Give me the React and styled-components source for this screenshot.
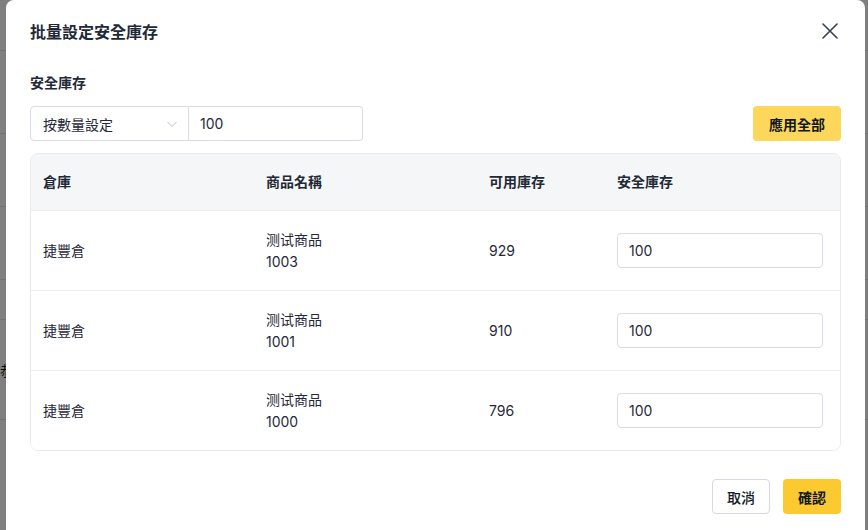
import React from 'react'
import styled, { createGlobalStyle } from 'styled-components'

const GlobalStyle = createGlobalStyle`
  html, body {
    margin: 0;
    padding: 0;
    height: 100%;
  }
  body {
    font-family: Inter, "Noto Sans CJK TC", "Noto Sans", sans-serif;
    color: #1f2937;
    background: #ffffff;
    overflow: hidden;
  }
  * { box-sizing: border-box; }
`

const rows = [
  { warehouse: '捷豐倉', name: '测试商品', sku: '1003', available: 929, safety: 100 },
  { warehouse: '捷豐倉', name: '测试商品', sku: '1001', available: 910, safety: 100 },
  { warehouse: '捷豐倉', name: '测试商品', sku: '1000', available: 796, safety: 100 },
]

// page sitting behind the dim layer
const BackPage = styled.div`
  height: 530px;
  display: flex;
  flex-direction: column;
  padding-top: 50px;
`

const BackRow = styled.div`
  height: ${(p) => p.h}px;
  border-top: 1px solid #e3e4e8;
  font-size: 14px;
  display: flex;
  align-items: center;
  color: #111;
`

const Overlay = styled.div`
  position: fixed;
  inset: 0;
  background: rgba(0, 0, 0, 0.5);
  display: flex;
  align-items: flex-start;
  padding-left: 6px;
`

const Modal = styled.div`
  width: 859px;
  height: 560px;
  background: #fff;
  border-radius: 8px;
  display: flex;
  flex-direction: column;
  padding: 0 24px;
`

const Header = styled.div`
  height: 60px;
  display: flex;
  align-items: center;
  justify-content: space-between;
  padding-top: 1px;
`

const Title = styled.h2`
  margin: 0;
  font-size: 16px;
  font-weight: 600;
  color: #1f2937;
`

const CloseButton = styled.button`
  border: none;
  background: none;
  padding: 0;
  width: 20px;
  height: 20px;
  display: flex;
  align-items: center;
  justify-content: center;
  margin-right: 1px;
  color: #374151;
  cursor: pointer;
`

const Label = styled.div`
  margin-top: 13px;
  font-size: 14px;
  line-height: 20px;
  font-weight: 600;
  color: #1f2937;
`

const Controls = styled.div`
  margin-top: 13px;
  display: flex;
  justify-content: space-between;
  align-items: center;
`

const Group = styled.div`
  display: flex;
`

const SelectBox = styled.div`
  width: 159px;
  height: 35px;
  border: 1px solid #d9dce4;
  border-radius: 4px 0 0 4px;
  display: flex;
  align-items: center;
  justify-content: space-between;
  padding: 0 10px 0 12px;
  font-size: 14px;
  color: #1f2937;
`

const TextInput = styled.input`
  width: ${(p) => p.w}px;
  height: 35px;
  border: 1px solid #d9dce4;
  border-left-width: ${(p) => (p.joined ? 0 : 1)}px;
  border-radius: ${(p) => (p.joined ? '0 4px 4px 0' : '4px')};
  padding: 0 11px;
  font-family: inherit;
  font-size: 14px;
  color: #1f2937;
  outline: none;
`

const Button = styled.button`
  height: 35px;
  padding: 0 ${(p) => p.px || 16}px;
  border-radius: 4px;
  font-family: inherit;
  font-size: 14px;
  color: #111827;
  cursor: pointer;
  border: 1px solid ${(p) => (p.variant === 'outline' ? '#d6d8e2' : 'transparent')};
  background: ${(p) =>
    p.variant === 'outline' ? '#fff' : p.variant === 'light' ? '#fcd75b' : '#fbca30'};
  font-weight: ${(p) => (p.variant === 'outline' ? 500 : 600)};
`

const Table = styled.div`
  margin-top: 12px;
  border: 1px solid #e8eaef;
  border-radius: 8px;
  overflow: hidden;
`

const Row = styled.div`
  display: grid;
  grid-template-columns: 223px 223px 128px 1fr;
  align-items: center;
  height: ${(p) => (p.head ? 56 : 80)}px;
  background: ${(p) => (p.head ? '#f5f6f8' : '#fff')};
  border-top: ${(p) => (p.first ? 'none' : '1px solid #eceef2')};
  font-size: 14px;
  font-weight: ${(p) => (p.head ? 600 : 400)};
  color: #1f2937;
`

const Cell = styled.div`
  padding: 0 19px 0 12px;
  line-height: 22px;
`

const Footer = styled.div`
  margin-top: 28px;
  display: flex;
  justify-content: flex-end;
  gap: 13px;
`

const XIcon = () => (
  <svg width="16" height="16" viewBox="0 0 16 16" fill="none">
    <path d="M1 1L15 15M15 1L1 15" stroke="currentColor" strokeWidth="1.6" strokeLinecap="round" />
  </svg>
)

const Chevron = () => (
  <svg width="12" height="12" viewBox="0 0 12 12" fill="none">
    <path d="M1.5 4L6 8.5L10.5 4" stroke="#b8bcc6" strokeWidth="1" />
  </svg>
)

const App = () => {
  return (
    <>
      <GlobalStyle />
      {/* page behind the dialog */}
      <BackPage>
        <BackRow h={83} />
        <BackRow h={73} />
        <BackRow h={73} />
        <BackRow h={40} />
        <BackRow h={100}>恭</BackRow>
        <BackRow h={60} />
      </BackPage>

      <Overlay>
        <Modal>
          <Header>
            <Title>批量設定安全庫存</Title>
            <CloseButton aria-label="close">
              <XIcon />
            </CloseButton>
          </Header>

          <Label>安全庫存</Label>
          <Controls>
            <Group>
              <SelectBox>
                <span>按數量設定</span>
                <Chevron />
              </SelectBox>
              <TextInput w={174} joined defaultValue="100" />
            </Group>
            <Button variant="light" px={15}>應用全部</Button>
          </Controls>

          <Table>
            <Row head first>
              <Cell>倉庫</Cell>
              <Cell>商品名稱</Cell>
              <Cell>可用庫存</Cell>
              <Cell>安全庫存</Cell>
            </Row>
            {rows.map((r) => (
              <Row key={r.sku}>
                <Cell>{r.warehouse}</Cell>
                <Cell>
                  <div>{r.name}</div>
                  <div>{r.sku}</div>
                </Cell>
                <Cell>{r.available}</Cell>
                <Cell>
                  <TextInput w={206} defaultValue={r.safety} />
                </Cell>
              </Row>
            ))}
          </Table>

          <Footer>
            <Button variant="outline" px={14}>取消</Button>
            <Button px={14}>確認</Button>
          </Footer>
        </Modal>
      </Overlay>
    </>
  )
}

export default App
